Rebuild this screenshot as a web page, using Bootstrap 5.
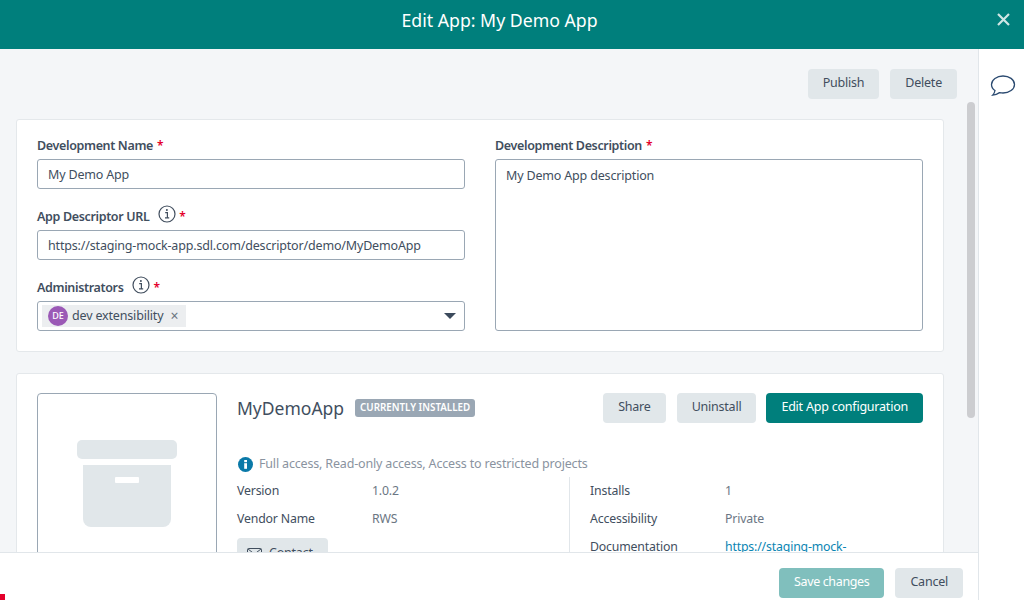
<!DOCTYPE html>
<html lang="en">
<head>
    <meta charset="UTF-8">
    <meta name="viewport" content="width=device-width, initial-scale=1.0">
    <title>Edit App</title>
    <link href="https://cdn.jsdelivr.net/npm/bootstrap@5.3.0/dist/css/bootstrap.min.css" rel="stylesheet">
    <style>
        html, body { height: 100%; overflow: hidden; }
        body { font-family: "Noto Sans", sans-serif; font-size: 12.5px; letter-spacing: -0.17px; color: #414e5e; background: #fff; }
        .app-head { height: 49px; background: #007f7c; color: #fff; flex: none; padding-right: 25px; }
        .app-head h1 { font-size: 17.7px; font-weight: 400; margin: 0; line-height: 40px; letter-spacing: 0; }
        .head-close { right: 14px; top: 13px; width: 13px; height: 13px; }
        .app-body { height: 551px; }
        .main-col { width: 979px; border-right: 1px solid #e1e6ea; }
        .scroll-area { background: #f4f6f8; height: 503px; overflow: hidden; padding: 20px 21px 0 16px; }
        .top-btns { gap: 11px; margin-bottom: 20px; }
        .btn-soft, .btn-teal { font-size: 12.5px; letter-spacing: -0.22px; height: 30px; padding: 0 15px 1px; border-radius: 4px; border: 0; }
        .btn-soft { background: #e1e7ea; color: #414e5e; }
        .btn-teal { background: #007f7c; color: #fff; }
        .btn-faded { background: #80bfbd; color: #fff; letter-spacing: -0.36px; }
        .panel { background: #fff; border: 1px solid #e4e8eb; border-radius: 3px; width: 928px; }
        .form-panel { height: 233px; padding: 16px 20px 0 20px; margin-bottom: 21px; }
        .form-cols { --bs-gutter-x: 30px; }
        .fld-label { font-weight: 600; letter-spacing: -0.35px; line-height: 18px; height: 18px; padding-top: 2px; margin-bottom: 5px; display: flex; align-items: center; }
        .req { color: #e4002b; margin-left: 4px; font-size: 12px; }
        .inf-ico { margin-left: 9px; width: 18px; height: 18px; margin-top: -6px; flex: none; }
        .req-after { margin-left: 3px; }
        .fld-input { height: 30px; border: 1px solid #9aa7b4; border-radius: 3px; padding: 0 10px; color: #414e5e; line-height: 30px; margin-bottom: 18px; background: #fff; }
        .fld-area { height: 172px; margin-bottom: 0; padding-top: 1px; }
        .fld-select { padding: 0 4px; }
        .tag-item { background: #eceef0; height: 22px; padding: 0 8px 0 6px; gap: 4px; }
        .avatar-dot { width: 20px; height: 20px; border-radius: 50%; background: #9b59b6; color: #fff; font-size: 9px; font-weight: 500; line-height: 20px; text-align: center; letter-spacing: 0; }
        .tag-x { color: #6a7480; font-size: 14px; line-height: 1; margin-left: 3px; }
        .caret-down { width: 0; height: 0; border-left: 6px solid transparent; border-right: 6px solid transparent; border-top: 6px solid #3c4a5c; margin-right: 4px; }
        .app-panel { padding: 19px 20px 0 20px; height: 400px; }
        .img-box { width: 180px; height: 300px; border: 1px solid #9aa7b4; border-radius: 4px; flex: none; padding-top: 46px; }
        .app-info { margin-left: 20px; }
        .app-title { font-size: 17.5px; line-height: 30px; color: #414e5e; letter-spacing: 0; }
        .inst-badge { background: #9aa7b4; color: #fff; font-size: 9.8px; font-weight: 600; letter-spacing: 0; border-radius: 3px; height: 18px; line-height: 18px; padding: 0 5px; margin-left: 11px; }
        .app-btns { gap: 10px; }
        .app-btns .btn-soft:first-child { margin-right: 1px; }
        .access-line { color: #8a93a0; margin-top: 31px; margin-left: 1px; height: 20px; gap: 6px; }
        .meta-cols { margin-top: 3px; }
        .meta-left { width: 332px; }
        .meta-right { border-left: 1px solid #e1e6ea; padding-left: 20px; flex: 1; }
        .meta-row { height: 28px; line-height: 28px; font-size: 12.3px; }
        .meta-key { width: 135px; flex: none; }
        .meta-val { color: #6b7683; }
        .meta-link { color: #0a85b3; text-decoration: none; }
        .contact-btn { margin-top: 5px; width: 91px; padding: 0 10px; gap: 7px; }
        .fake-thumb { right: 3px; top: 53px; width: 8px; height: 316px; background: #cccdd0; border-radius: 4px; }
        .foot-bar { height: 48px; border-top: 1px solid #e1e6ea; gap: 11px; padding: 15px 15px 0 0; background: #fff; }
        .side-rail { width: 45px; padding-top: 25px; padding-left: 2px; }
        .top-row-width { width: 941px; }
        .red-mark { left: 0; bottom: 0; width: 5px; height: 6px; background: #e4002b; }
    </style>
</head>
<body class="d-flex flex-column position-relative">
    <header class="app-head position-relative text-center">
        <h1>Edit App: My Demo App</h1>
        <svg class="head-close position-absolute" viewBox="0 0 13 13"><path d="M1 1 L12 12 M12 1 L1 12" stroke="#cfe6e5" stroke-width="2.2" fill="none"/></svg>
    </header>

    <div class="app-body d-flex">
        <div class="main-col d-flex flex-column position-relative">
            <div class="scroll-area flex-grow-1">
                <div class="top-btns top-row-width d-flex justify-content-end">
                    <button class="btn-soft">Publish</button>
                    <button class="btn-soft">Delete</button>
                </div>

                <div class="panel form-panel">
                    <div class="row form-cols">
                        <div class="col-6">
                            <div class="fld-label">Development Name <span class="req">*</span></div>
                            <div class="fld-input">My Demo App</div>
                            <div class="fld-label">App Descriptor URL
                                <svg class="inf-ico" viewBox="0 0 18 18"><circle cx="9" cy="9" r="8" fill="none" stroke="#414e5e" stroke-width="1.2"/><path d="M7.2 7.6h2.2v5M7 12.8h4.2" fill="none" stroke="#414e5e" stroke-width="1.2"/><circle cx="8.9" cy="5" r="1" fill="#414e5e"/></svg>
                                <span class="req req-after">*</span></div>
                            <div class="fld-input">https://staging-mock-app.sdl.com/descriptor/demo/MyDemoApp</div>
                            <div class="fld-label">Administrators
                                <svg class="inf-ico" viewBox="0 0 18 18"><circle cx="9" cy="9" r="8" fill="none" stroke="#414e5e" stroke-width="1.2"/><path d="M7.2 7.6h2.2v5M7 12.8h4.2" fill="none" stroke="#414e5e" stroke-width="1.2"/><circle cx="8.9" cy="5" r="1" fill="#414e5e"/></svg>
                                <span class="req req-after">*</span></div>
                            <div class="fld-input fld-select d-flex justify-content-between align-items-center mb-0">
                                <div class="tag-item d-flex align-items-center">
                                    <span class="avatar-dot">DE</span>
                                    <span>dev extensibility</span>
                                    <span class="tag-x">&times;</span>
                                </div>
                                <span class="caret-down"></span>
                            </div>
                        </div>
                        <div class="col-6">
                            <div class="fld-label">Development Description <span class="req">*</span></div>
                            <div class="fld-input fld-area">My Demo App description</div>
                        </div>
                    </div>
                </div>

                <div class="panel app-panel d-flex">
                    <div class="img-box d-flex justify-content-center">
                        <svg width="100" height="88" viewBox="0 0 100 88"><rect x="0" y="0" width="100" height="19" rx="5" fill="#e1e7ea"/><path d="M6 25h88v54a8 8 0 0 1-8 8H14a8 8 0 0 1-8-8z" fill="#e1e7ea"/><rect x="38" y="37" width="24" height="6" rx="1" fill="#fff"/></svg>
                    </div>
                    <div class="app-info flex-grow-1">
                        <div class="d-flex align-items-center justify-content-between">
                            <div class="d-flex align-items-center">
                                <span class="app-title">MyDemoApp</span>
                                <span class="inst-badge">CURRENTLY INSTALLED</span>
                            </div>
                            <div class="app-btns d-flex">
                                <button class="btn-soft">Share</button>
                                <button class="btn-soft">Uninstall</button>
                                <button class="btn-teal">Edit App configuration</button>
                            </div>
                        </div>
                        <div class="access-line d-flex align-items-center">
                            <svg width="15" height="15" viewBox="0 0 15 15"><circle cx="7.5" cy="7.5" r="7.5" fill="#0a79a8"/><rect x="6.2" y="6.2" width="2.8" height="5.6" fill="#fff"/><rect x="6.2" y="3" width="2.8" height="2.2" fill="#fff"/></svg>
                            <span>Full access, Read-only access, Access to restricted projects</span>
                        </div>
                        <div class="meta-cols d-flex">
                            <div class="meta-left">
                                <div class="meta-row d-flex"><span class="meta-key">Version</span><span class="meta-val">1.0.2</span></div>
                                <div class="meta-row d-flex"><span class="meta-key">Vendor Name</span><span class="meta-val">RWS</span></div>
                                <button class="btn-soft contact-btn d-flex align-items-center">
                                    <svg width="15" height="11" viewBox="0 0 15 11"><rect x=".5" y=".5" width="14" height="10" rx="1" fill="none" stroke="#414e5e"/><path d="M1 1l6.500 5L14 1" fill="none" stroke="#414e5e"/></svg>
                                    Contact
                                </button>
                            </div>
                            <div class="meta-right">
                                <div class="meta-row d-flex"><span class="meta-key">Installs</span><span class="meta-val">1</span></div>
                                <div class="meta-row d-flex"><span class="meta-key">Accessibility</span><span class="meta-val">Private</span></div>
                                <div class="meta-row d-flex"><span class="meta-key">Documentation</span><a class="meta-link" href="#">https://staging-mock-</a></div>
                            </div>
                        </div>
                    </div>
                </div>
            </div>
            <div class="fake-thumb position-absolute"></div>
            <footer class="foot-bar d-flex justify-content-end align-items-start">
                <button class="btn-soft btn-faded">Save changes</button>
                <button class="btn-soft">Cancel</button>
            </footer>
        </div>
        <aside class="side-rail d-flex justify-content-center">
            <svg width="26" height="24" viewBox="0 0 26 24"><path d="M13 2C6.8 2 1.5 5.7 1.5 10.4c0 2.4 1.3 4.6 3.5 6.1-.3 1.7-1.1 3.4-2.3 4.6 2.5-.2 5-1.200 6.800-2.500 1.100.2 2.300.4 3.500.4 6.200 0 11.500-3.800 11.500-8.600S19.200 2 13 2z" fill="none" stroke="#2b4a70" stroke-width="1.300"/></svg>
        </aside>
    </div>
    <div class="red-mark position-absolute"></div>

    <script src="https://cdn.jsdelivr.net/npm/bootstrap@5.3.0/dist/js/bootstrap.bundle.min.js"></script>
</body>
</html>
